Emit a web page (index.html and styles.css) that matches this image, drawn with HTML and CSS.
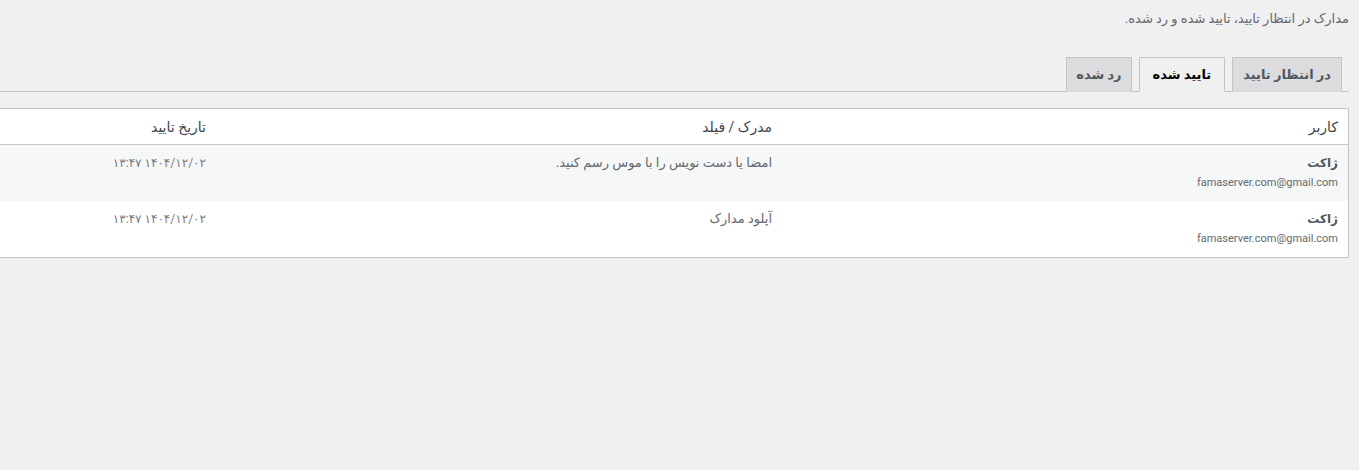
FILE: index.html
```html
<!DOCTYPE html>
<html lang="fa" dir="rtl">
<head>
<meta charset="utf-8">
<title>مدارک</title>
<link rel="stylesheet" href="styles.css">
</head>
<body>
<div class="wrap">
  <p class="desc">مدارک در انتظار تایید، تایید شده و رد شده.</p>
  <nav class="tabs">
    <a class="tab" href="#">در انتظار تایید</a>
    <a class="tab active" href="#">تایید شده</a>
    <a class="tab" href="#">رد شده</a>
  </nav>
  <table class="grid">
    <thead>
      <tr><th>کاربر</th><th>مدرک / فیلد</th><th>تاریخ تایید</th></tr>
    </thead>
    <tbody>
      <tr class="alt">
        <td><strong class="name">ژاکت</strong><span class="mail">famaserver.com@gmail.com</span></td>
        <td class="doc">امضا یا دست نویس را با موس رسم کنید.</td>
        <td class="date">۱۴۰۴/۱۲/۰۲ ۱۳:۴۷</td>
      </tr>
      <tr>
        <td><strong class="name">ژاکت</strong><span class="mail">famaserver.com@gmail.com</span></td>
        <td class="doc">آپلود مدارک</td>
        <td class="date">۱۴۰۴/۱۲/۰۲ ۱۳:۴۷</td>
      </tr>
    </tbody>
  </table>
</div>
</body>
</html>
```
FILE: styles.css
```css
html, body {
  margin: 0;
  padding: 0;
  overflow-x: hidden;
  background: #f0f0f1;
}
body {
  font-family: Roboto, "DejaVu Sans", sans-serif;
  font-size: 13px;
  color: #3c434a;
}
.wrap {
  margin-left: -351px;
  padding-right: 10px;
  padding-top: 9px;
}
.desc {
  margin: 0;
  line-height: 19px;
  font-size: 13px;
  color: #646970;
}
.tabs {
  margin-top: 29px;
  display: flex;
  border-bottom: 1px solid #c3c4c7;
  padding-right: 7px;
  gap: 7px;
  align-items: flex-end;
}
.tab {
  display: block;
  padding: 5px 10px;
  height: 24px;
  line-height: 24px;
  font-size: 13px;
  font-weight: bold;
  color: #50575e;
  background: #dcdcde;
  border: 1px solid #c3c4c7;
  border-bottom: none;
  text-decoration: none;
  margin-bottom: -1px;
}
.tab:last-child {
  padding: 5px 9px;
}
.tab.active {
  background: #f0f0f1;
  color: #000;
  border-bottom: 1px solid #f0f0f1;
  padding: 5px 13px 4px;
}
.grid {
  margin-top: 16px;
  width: 100%;
  table-layout: fixed;
  border-collapse: separate;
  border-spacing: 0;
  background: #fff;
  border: 1px solid #c3c4c7;
}
.grid th {
  text-align: right;
  font-weight: normal;
  font-size: 14px;
  color: #3c434a;
  padding: 8px 10px 7px;
  height: 20px;
  line-height: 20px;
  border-bottom: 1px solid #c3c4c7;
}
.grid td {
  vertical-align: top;
  padding: 8px 10px;
  height: 40px;
  line-height: 20px;
  color: #646970;
}
.grid tr.alt td {
  background: #f6f7f7;
}
.name {
  display: block;
  font-size: 12px;
  color: #50575e;
}
.mail {
  display: block;
  font-size: 11px;
  color: #646970;
}
.doc {
  font-size: 13px;
}
.grid td.date {
  font-size: 12px;
  color: #787c82;
}
```
